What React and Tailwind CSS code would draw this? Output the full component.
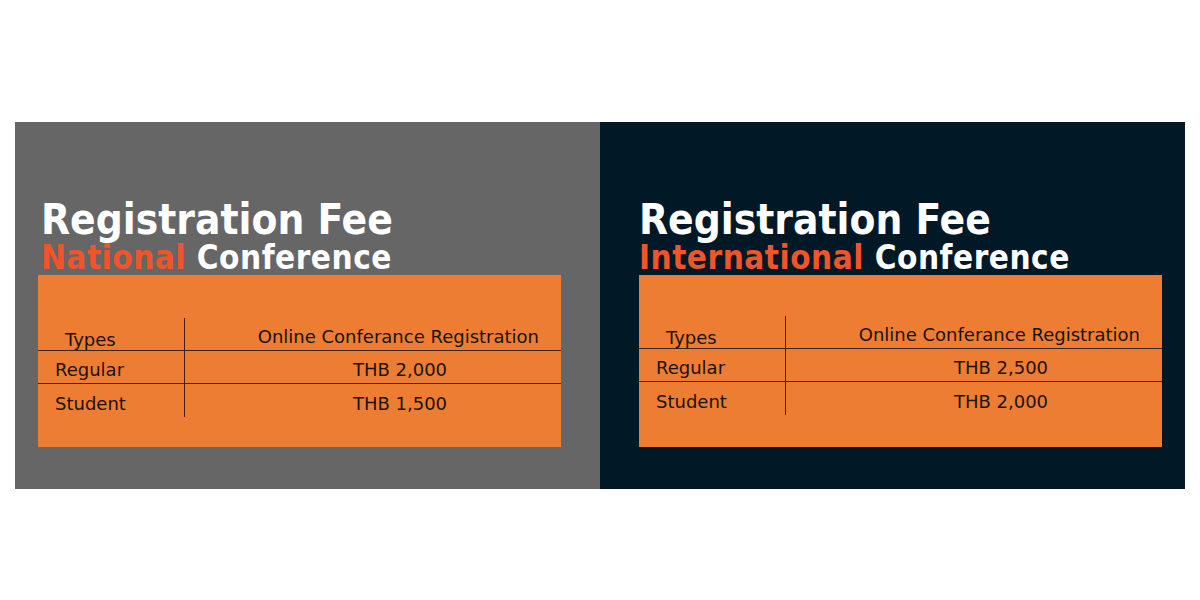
export default function App() {
  const panels = [
    {
      bg: "bg-[#666666]",
      pad: "pl-[23px]",
      titleShift: "pl-[3px]",
      tableTop: "pt-[43px]",
      label: "National",
      rows: [
        ["Regular", "THB 2,000"],
        ["Student", "THB 1,500"],
      ],
    },
    {
      bg: "bg-[#011827]",
      pad: "pl-[39px]",
      titleShift: "pl-0",
      tableTop: "pt-[41px]",
      label: "International",
      rows: [
        ["Regular", "THB 2,500"],
        ["Student", "THB 2,000"],
      ],
    },
  ];

  return (
    <div className="w-[1200px] h-[600px] bg-white pt-[122px] px-[15px]">
      <div className="flex h-[367px]">
        {panels.map((p) => (
          <div key={p.label} className={`w-[585px] h-full ${p.bg} ${p.pad}`}>
            {/* Title */}
            <div
              className={`pt-[77px] ${p.titleShift} font-bold`}
              style={{ fontFamily: '"DejaVu Sans Condensed", "DejaVu Sans", sans-serif' }}
            >
              <div className="text-white text-[42px] leading-[42px] h-[42px]">
                Registration Fee
              </div>
              <div className="text-[33px] leading-[34px] h-[34px] tracking-[0.5px]">
                <span className="text-[#f0552a]">{p.label}</span>{" "}
                <span className="text-white">Conference</span>
              </div>
            </div>

            {/* Fee table */}
            <div
              className={`w-[523px] h-[172px] bg-[#ed7d32] ${p.tableTop} text-[#1a1208] text-[18px]`}
              style={{ fontFamily: '"DejaVu Sans", sans-serif' }}
            >
              <div className="flex h-[33px] border-b border-[#3b2410]">
                <div className="w-[147px] border-r border-[#3b2410] pl-[27px] flex items-end -mb-[3px]">
                  Types
                </div>
                <div className="flex-1 flex items-end justify-end pr-[22px]">
                  Online Conferance Registration
                </div>
              </div>
              {p.rows.map((r, i) => (
                <div
                  key={r[0]}
                  className={`flex h-[33px] ${i === 0 ? "border-b border-[#3b2410]" : ""}`}
                >
                  <div className="w-[147px] border-r border-[#3b2410] pl-[17px] flex items-center pt-[5px]">
                    {r[0]}
                  </div>
                  <div className="flex-1 flex items-center justify-center pl-[54px] pt-[5px]">
                    {r[1]}
                  </div>
                </div>
              ))}
            </div>
          </div>
        ))}
      </div>
    </div>
  );
}
